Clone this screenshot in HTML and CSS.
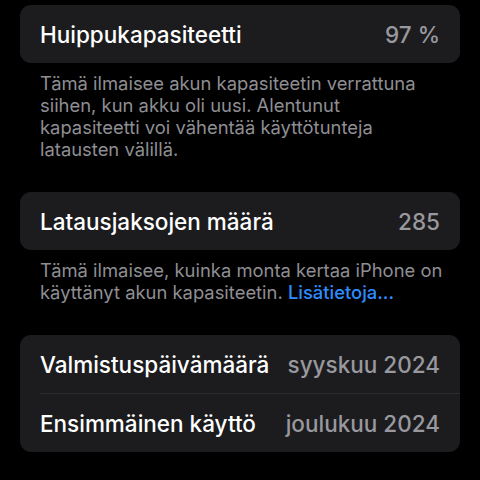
FILE: index.html
```html
<!DOCTYPE html>
<html lang="fi">

<head>
  <meta charset="UTF-8">
  <meta name="viewport" content="width=device-width, initial-scale=1.0">
  <title>Akun kunto</title>
  <link rel="stylesheet" href="styles.css">
</head>

<body>
  <div class="page">
    <div class="group">
      <div class="card">
        <div class="row">
          <span class="label">Huippukapasiteetti</span>
          <span class="value">97 %</span>
        </div>
      </div>
      <p class="footer">Tämä ilmaisee akun kapasiteetin verrattuna<br>siihen, kun akku oli uusi. Alentunut<br>kapasiteetti voi vähentää käyttötunteja<br>latausten välillä.</p>
    </div>

    <div class="group">
      <div class="card">
        <div class="row">
          <span class="label">Latausjaksojen määrä</span>
          <span class="value">285</span>
        </div>
      </div>
      <p class="footer">Tämä ilmaisee, kuinka monta kertaa iPhone on<br>käyttänyt akun kapasiteetin. <a href="#" class="link">Lisätietoja...</a></p>
    </div>

    <div class="group">
      <div class="card">
        <div class="row">
          <span class="label">Valmistuspäivämäärä</span>
          <span class="value">syyskuu 2024</span>
        </div>
        <div class="row">
          <span class="label">Ensimmäinen käyttö</span>
          <span class="value">joulukuu 2024</span>
        </div>
      </div>
    </div>
  </div>
</body>

</html>
```

FILE: styles.css
```css
body,
html {
  margin: 0;
  background-color: #000;
  font-family: Inter, "Noto Sans", sans-serif;
}

.page {
  padding: 5px 20px 0;
}

.group {
  margin-bottom: 32px;
}

.card {
  background-color: #1c1c1e;
  border-radius: 11px;
  overflow: hidden;
}

.row {
  display: flex;
  justify-content: space-between;
  align-items: center;
  height: 58px;
  margin-left: 20px;
  padding-right: 20px;
  font-size: 22.5px;
}

.row + .row {
  border-top: 1px solid #2c2c2e;
}

.label {
  color: #fff;
  font-weight: 500;
}

.value {
  color: #98989e;
  font-weight: 500;
}

.footer {
  margin: 9px 10px 0 20px;
  color: #8e8e93;
  font-size: 18.4px;
  line-height: 22px;
}

.link {
  color: #2f8cff;
  text-decoration: none;
  font-weight: 500;
}
```
